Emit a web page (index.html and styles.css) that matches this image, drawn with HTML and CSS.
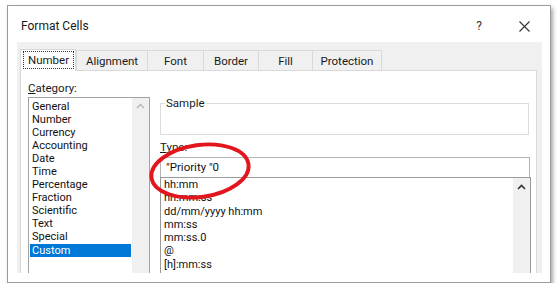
FILE: index.html
```html
<!DOCTYPE html>
<html lang="en">
<head>
<meta charset="utf-8">
<title>Format Cells</title>
<link rel="stylesheet" href="styles.css">
</head>
<body>
<div class="frame">
  <div class="titlebar">
    <span class="title">Format Cells</span>
    <div class="controls">
      <span class="help">?</span>
      <svg class="close" width="11" height="11" viewBox="0 0 11 11"><path d="M0.5 0.5 L10.5 10.5 M10.5 0.5 L0.5 10.5" stroke="#333" stroke-width="1.1" fill="none"/></svg>
    </div>
  </div>
  <div class="body">
    <div class="tabs">
      <div class="tab active w-number"><span class="focus">Number</span></div>
      <div class="tab w-align">Alignment</div>
      <div class="tab w-font">Font</div>
      <div class="tab w-border">Border</div>
      <div class="tab w-fill">Fill</div>
      <div class="tab w-prot last">Protection</div>
    </div>
    <div class="page">
      <div class="left">
        <div class="label"><u>C</u>ategory:</div>
        <div class="listbox cat">
          <ul class="items">
            <li>General</li>
            <li>Number</li>
            <li>Currency</li>
            <li>Accounting</li>
            <li>Date</li>
            <li>Time</li>
            <li>Percentage</li>
            <li>Fraction</li>
            <li>Scientific</li>
            <li>Text</li>
            <li>Special</li>
            <li class="selected">Custom</li>
          </ul>
          <div class="scroll"><svg class="chev" width="9" height="6" viewBox="0 0 9 6"><path d="M1 5 L4.5 1.5 L8 5" stroke="#b4b4b4" stroke-width="1.3" fill="none"/></svg></div>
        </div>
      </div>
      <div class="right">
        <fieldset class="sample"><legend>Sample</legend></fieldset>
        <div class="label type-label"><u>T</u>ype:</div>
        <div class="input">"Priority "0</div>
        <div class="listbox typelist">
          <ul class="items">
            <li>hh:mm</li>
            <li>hh:mm:ss</li>
            <li>dd/mm/yyyy hh:mm</li>
            <li>mm:ss</li>
            <li>mm:ss.0</li>
            <li>@</li>
            <li>[h]:mm:ss</li>
            <li class="partial">_-"£"* #,##0_-;-"£"* #,##0_-;_-"£"* "-"_-;_-@_-</li>
          </ul>
          <div class="scroll"><svg class="chev dark" width="9" height="6" viewBox="0 0 9 6"><path d="M1 5 L4.5 1.5 L8 5" stroke="#333" stroke-width="1.6" fill="none"/></svg></div>
        </div>
      </div>
    </div>
  </div>
  <svg class="annot" width="130" height="80" viewBox="0 0 130 80">
    <ellipse cx="66" cy="38" rx="49" ry="26" transform="rotate(-8 66 38)" fill="none" stroke="#e3161d" stroke-width="3.8"/>
  </svg>
</div>
</body>
</html>
```

FILE: styles.css
```css
* { box-sizing: border-box; }

body {
  margin: 0;
  background: #ffffff;
  font-family: Roboto, "Liberation Sans", "Noto Sans", sans-serif;
  color: #000;
}

.frame {
  position: relative;
  margin: 5px 0 0 7px;
  width: 544px;
  height: 278px;
  border: 1px solid #9c9c9c;
  background: #ffffff;
  box-shadow: 2px 3px 4px rgba(0, 0, 0, 0.35);
}

.titlebar {
  height: 36px;
  padding: 4px 20px 0 13px;
  display: flex;
  align-items: center;
}

.title {
  font-size: 12px;
  color: #1a1a1a;
}

.controls {
  margin-left: auto;
  display: flex;
  align-items: center;
  gap: 37px;
}

.help {
  font-size: 12px;
  color: #333;
}

.body {
  margin-left: 9px;
  width: 525px;
  height: 231px;
  background: #f0f0f0;
  padding-left: 3px;
}

.tabs {
  height: 28px;
  display: flex;
  align-items: flex-end;
}

.tab {
  height: 20px;
  border-left: 1px solid #d9d9d9;
  border-top: 1px solid #d9d9d9;
  font-size: 11.5px;
  display: flex;
  align-items: center;
  justify-content: center;
  color: #1a1a1a;
  background: #f0f0f0;
}

.tab.last { border-right: 1px solid #d9d9d9; }

.tab.active {
  height: 22px;
  margin-bottom: -1px;
  position: relative;
  z-index: 1;
  background: #ffffff;
  border-right: 1px solid #d9d9d9;
  padding: 1px 1px 2px 2px;
  align-items: stretch;
}

.focus {
  flex: 1;
  border: 1px dotted #333;
  display: flex;
  align-items: center;
  justify-content: center;
}

.w-number { width: 56px; }
.w-align { width: 71px; }
.w-font { width: 56px; }
.w-border { width: 55px; }
.w-fill { width: 54px; }
.w-prot { width: 70px; }

.page {
  width: 517px;
  height: 203px;
  border: 1px solid #d9d9d9;
  border-bottom: none;
  background: #ffffff;
  padding-left: 7px;
  display: flex;
}

.left {
  width: 122px;
  padding-top: 10px;
  display: flex;
  flex-direction: column;
}

.label {
  font-size: 11.5px;
  line-height: 14px;
  color: #1a1a1a;
}

.listbox {
  border: 1px solid #a3a3a3;
  border-bottom: none;
  display: flex;
  flex: 1;
  overflow: hidden;
}

.cat { margin-top: 2px; }

.items {
  list-style: none;
  margin: 0;
  flex: 1;
  font-size: 11px;
  white-space: nowrap;
  overflow: hidden;
  color: #111;
}

.cat .items { padding: 1.5px 1px 0 1px; }

.cat .items li {
  line-height: 13.1px;
  height: 13.1px;
  padding-left: 2px;
}

.cat .items li.selected {
  background: #0078d7;
  color: #ffffff;
}

.scroll {
  width: 17px;
  background: #f0f0f0;
  display: flex;
  justify-content: center;
  align-items: flex-start;
}

.cat .scroll .chev { margin-top: 5px; }

.right {
  margin-left: 10px;
  width: 371px;
  padding-top: 25px;
  display: flex;
  flex-direction: column;
}

.sample {
  margin: 0;
  padding: 0;
  width: 369px;
  height: 39px;
  border: 1px solid #dcdcdc;
}

.sample legend {
  margin-left: 4px;
  padding: 0 1px;
  font-size: 11.5px;
  line-height: 14px;
  color: #1a1a1a;
}

.type-label { margin-top: 5px; }

.input {
  margin-top: 3px;
  width: 370px;
  height: 21px;
  border: 1px solid #b4b4b4;
  border-bottom-color: #8e8e8e;
  padding-left: 5px;
  font-size: 11.5px;
  line-height: 19px;
  color: #111;
}

.typelist {
  margin-top: -1px;
  width: 371px;
  border-color: #9a9a9a;
}

.typelist .items { padding: 0 0 0 3px; }

.typelist .items li {
  line-height: 13.3px;
  height: 13.3px;
}

.typelist .items li.partial {
  height: 9px;
  overflow: hidden;
}

.typelist .scroll .chev { margin-top: 6px; }

.annot {
  position: absolute;
  left: 126px;
  top: 127px;
}
```
